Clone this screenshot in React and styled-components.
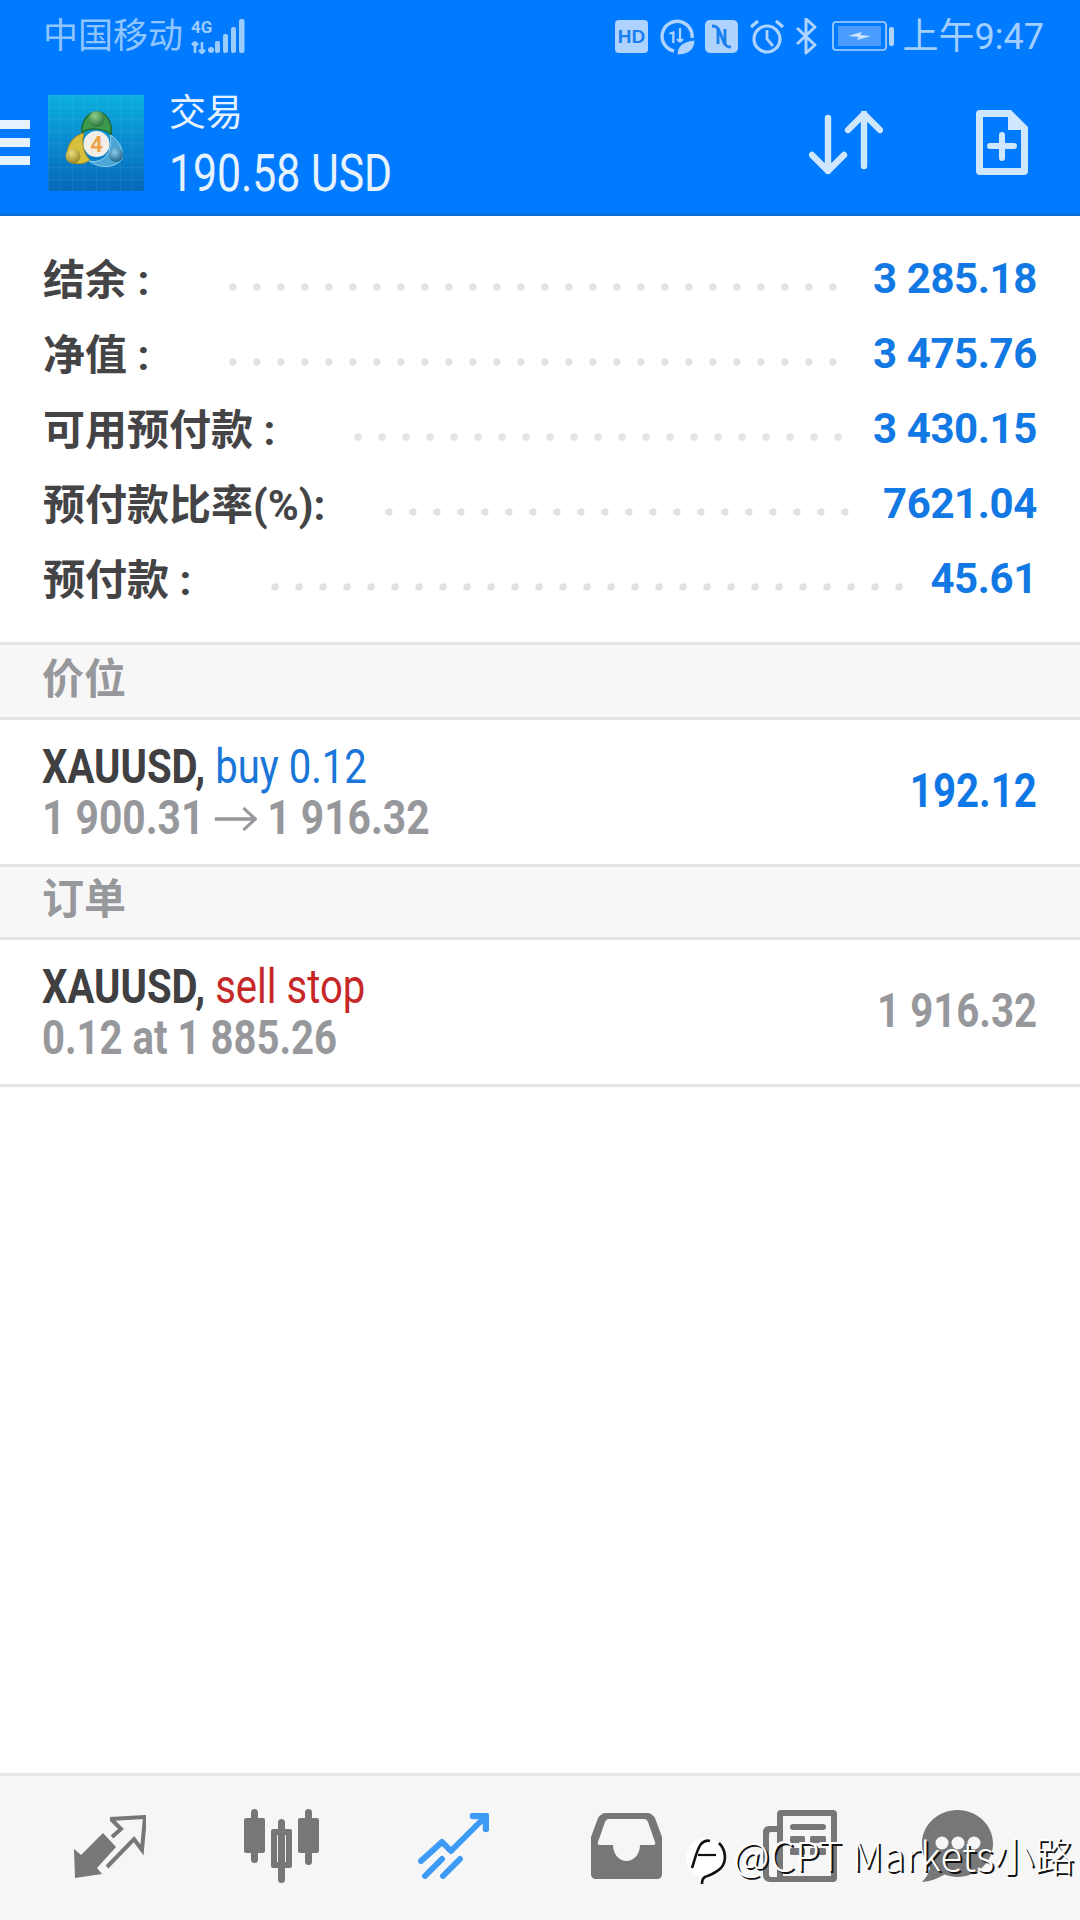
import React from "react";
import styled, { createGlobalStyle } from "styled-components";

const GlobalStyle = createGlobalStyle`
  html, body { margin: 0; padding: 0; background: #fff; }
  body { font-family: Roboto, "Noto Sans CJK SC", sans-serif; }
  * { box-sizing: border-box; }
`;

const summary = [
  { label: "结余 :", value: "3 285.18", gap: 80, dots: 26 },
  { label: "净值 :", value: "3 475.76", gap: 80, dots: 26 },
  { label: "可用预付款 :", value: "3 430.15", gap: 79, dots: 21 },
  { label: "预付款比率(%):", value: "7621.04", gap: 60, dots: 20 },
  { label: "预付款 :", value: "45.61", gap: 80, dots: 27 },
];

export default function App() {
  return (
    <Screen>
      <GlobalStyle />
      <TopBar>
        <StatusBar>
          <Carrier>中国移动</Carrier>
          <SignalIcon />
          <StatusRight>
            <StatusIcons />
            <Clock>上午9:47</Clock>
          </StatusRight>
        </StatusBar>
        <AppBar>
          <Burger><i /><i /><i /></Burger>
          <Mt4Logo />
          <Titles>
            <Title>交易</Title>
            <Profit>190.58 USD</Profit>
          </Titles>
          <Actions>
            <SortIcon />
            <NewOrderIcon />
          </Actions>
        </AppBar>
      </TopBar>

      <Summary>
        {summary.map((row) => (
          <SummaryRow key={row.label}>
            <Label>{row.label}</Label>
            <Leader $gap={row.gap} $dots={row.dots} />
            <Amount>{row.value}</Amount>
          </SummaryRow>
        ))}
      </Summary>

      <SectionHead $height={75} $lift={11}>价位</SectionHead>
      <TradeRow>
        <div>
          <TradeLine>
            <Symbol>XAUUSD,</Symbol> <Side $color="#1976d8">buy 0.12</Side>
          </TradeLine>
          <TradeLine $muted $squeeze={0.85}>1 900.31 <ArrowGlyph /> 1 916.32</TradeLine>
        </div>
        <TradeValue $color="#0f78e6">192.12</TradeValue>
      </TradeRow>

      <SectionHead $height={73} $lift={14}>订单</SectionHead>
      <TradeRow>
        <div>
          <TradeLine>
            <Symbol>XAUUSD,</Symbol> <Side $color="#c62828">sell stop</Side>
          </TradeLine>
          <TradeLine $muted $squeeze={0.835}>0.12 at 1 885.26</TradeLine>
        </div>
        <TradeValue $color="#97989c">1 916.32</TradeValue>
      </TradeRow>

      <Spacer />

      <BottomNav>
        <NavSlot $left={74}><QuotesIcon /></NavSlot>
        <NavSlot $left={98}><ChartIcon /></NavSlot>
        <NavSlot $left={99}><TradeIcon /></NavSlot>
        <NavSlot $left={102}><InboxIcon /></NavSlot>
        <NavSlot $left={101}><NewsIcon /></NavSlot>
        <NavSlot $left={85}><ChatIcon /></NavSlot>
      </BottomNav>

      <Watermark>
        <WatermarkIcon />
        <WatermarkText>@CPT Markets小路</WatermarkText>
      </Watermark>
    </Screen>
  );
}

/* ---- icons ---- */

const SignalIcon = () => (
  <SignalSvg width="54" height="36" viewBox="0 0 54 36">
    <text x="0" y="14" fontFamily="Roboto" fontWeight="700" fontSize="17" fill="#9ccbff">4G</text>
    <path d="M4 34V23M4 23l-3 3M4 23l3 3M11 23v11M11 34l-3-3M11 34l3-3" stroke="#9ccbff" strokeWidth="2.600" fill="none" />
    <g fill="#9ccbff">
      <circle cx="20" cy="31" r="3" />
      <rect x="24" y="22" width="5" height="12" rx="2" />
      <rect x="32" y="15" width="5" height="19" rx="2" />
      <rect x="40" y="8" width="5" height="26" rx="2" />
      <rect x="48" y="0" width="5.500" height="34" rx="2" />
    </g>
  </SignalSvg>
);

const StatusIcons = () => (
  <svg width="279" height="38" viewBox="0 0 279 38">
    <rect x="0" y="2" width="33" height="33" rx="4" fill="#aed3ff" />
    <text x="16.500" y="25" textAnchor="middle" fontFamily="Liberation Sans" fontWeight="700" fontSize="19" fill="#1a7fee">HD</text>

    <path d="M59 33A15 15 0 1 1 77 20" fill="none" stroke="#aed3ff" strokeWidth="3.400" />
    <text x="53" y="25" fontFamily="Roboto" fontWeight="700" fontSize="16" fill="#aed3ff">1</text>
    <path d="M65 10v14m0 0l-3-3m3 3l3-3" fill="none" stroke="#aed3ff" strokeWidth="2.200" />
    <path d="M62 37c0-9 6-14 18-15 0 10-7 15-18 15z" fill="#aed3ff" stroke="#007aff" strokeWidth="1" />

    <rect x="90" y="2" width="33" height="33" rx="5" fill="#aed3ff" />
    <path d="M97 8c5 0 6 2 6 5v13M116 29c-5 0-6-2-6-5V11M103 10l7 17" fill="none" stroke="#1a7fee" strokeWidth="2.800" />

    <circle cx="152" cy="21" r="13" fill="none" stroke="#aed3ff" strokeWidth="3.200" />
    <path d="M152 12v9l6 7" fill="none" stroke="#aed3ff" strokeWidth="2.800" />
    <path d="M136 9l7-6M168 9l-7-6" stroke="#aed3ff" strokeWidth="3.200" />

    <path d="M182 10l18 17-9 8V1l9 8-18 17" fill="none" stroke="#aed3ff" strokeWidth="3" strokeLinejoin="round" />

    <rect x="218" y="4" width="53" height="28" rx="3" fill="none" stroke="#aed3ff" strokeWidth="1.600" />
    <rect x="223" y="8" width="43" height="20" fill="#4a9cff" />
    <path d="M233 18l14-4-2 3 11 1-14 4 2-3z" fill="#cfe6ff" />
    <rect x="274" y="9" width="5" height="19" rx="2" fill="#aed3ff" />
  </svg>
);

const Mt4Logo = () => (
  <LogoSvg width="96" height="96" viewBox="0 0 96 96">
    <defs>
      <linearGradient id="tile" x1="0" y1="0" x2="0" y2="1">
        <stop offset="0" stopColor="#0bb0dd" />
        <stop offset="0.55" stopColor="#0a86ce" />
        <stop offset="1" stopColor="#0668b8" />
      </linearGradient>
      <pattern id="mesh" width="12" height="12" patternUnits="userSpaceOnUse">
        <path d="M12 0H0V12" fill="none" stroke="#ffffff" strokeOpacity="0.1" />
      </pattern>
      <radialGradient id="ballG" cx="0.4" cy="0.3" r="0.8">
        <stop offset="0" stopColor="#8fcf8a" />
        <stop offset="1" stopColor="#1f6a36" />
      </radialGradient>
      <radialGradient id="ballY" cx="0.4" cy="0.3" r="0.8">
        <stop offset="0" stopColor="#ece07c" />
        <stop offset="1" stopColor="#8f7a1c" />
      </radialGradient>
      <radialGradient id="ballB" cx="0.4" cy="0.3" r="0.8">
        <stop offset="0" stopColor="#8accea" />
        <stop offset="1" stopColor="#14557f" />
      </radialGradient>
    </defs>
    <rect width="96" height="96" fill="url(#tile)" />
    <rect width="96" height="96" fill="url(#mesh)" />
    <path d="M34 38C33 26 40 17 49 17c9 0 16 10 14 23-5-7-23-8-29-2z" fill="#3c9a4c" stroke="#1f6a36" strokeWidth="1.500" />
    <path d="M36 38C26 40 18 50 19 62c3 8 15 9 23 3-6-5-9-17-6-27z" fill="#d7c03c" stroke="#9c8a22" strokeWidth="1" />
    <path d="M62 40c8 4 14 14 12 24-6 9-22 10-33 2 9 2 17-2 20-10 2-6 2-11 1-16z" fill="#4aa6d6" stroke="#8fd0ec" strokeWidth="1" />
    <circle cx="48.500" cy="24" r="8" fill="url(#ballG)" />
    <circle cx="25" cy="61" r="7.500" fill="url(#ballY)" />
    <circle cx="68" cy="60" r="7" fill="url(#ballB)" />
    <circle cx="48.500" cy="49" r="13" fill="#f3efe8" />
    <text x="48.500" y="57" textAnchor="middle" fontFamily="Roboto" fontWeight="700" fontSize="22" fill="#eea24a">4</text>
  </LogoSvg>
);

const SortIcon = () => (
  <svg width="74" height="64" viewBox="0 0 74 64" fill="none" stroke="#cfe6ff" strokeWidth="6.400" strokeLinecap="round" strokeLinejoin="round">
    <path d="M19 7v53M3 44l16 16 16-16" />
    <path d="M55 2v53M39 19L55 3l16 16" />
  </svg>
);

const NewOrderIcon = () => (
  <svg width="54" height="67" viewBox="0 0 54 67">
    <path d="M5 1h31l17 17v44a4 4 0 0 1-4 4H5a4 4 0 0 1-4-4V5a4 4 0 0 1 4-4zM8 8v51h38V21H33V8z" fill="#cfe6ff" fillRule="evenodd" />
    <path d="M27 26v23M15 37h24" stroke="#cfe6ff" strokeWidth="6" strokeLinecap="round" />
  </svg>
);

const ArrowGlyph = () => (
  <ArrowSvg width="50" height="26" viewBox="0 0 50 26" fill="none" stroke="#97989c" strokeWidth="3.400">
    <path d="M0 13h48M34 2l14 11-14 11" />
  </ArrowSvg>
);

const QuotesIcon = () => (
  <svg width="72" height="63" viewBox="0 0 72 63">
    <path d="M0 34l7 6L29 18l13 14-19 21 5 6-27 4z" fill="#777" />
    <path d="M36 4l35-2-3 33-8-11-27 28" fill="none" stroke="#777" strokeWidth="4" />
    <path d="M37 4l10 10-9 8" fill="none" stroke="#777" strokeWidth="4" />
  </svg>
);

const ChartIcon = () => (
  <svg width="75" height="74" viewBox="0 0 75 74" fill="#777">
    <rect x="7" y="0" width="7" height="54" rx="3.500" />
    <rect x="0" y="9" width="21" height="35" rx="2" />
    <rect x="34" y="10" width="7" height="64" rx="3.500" />
    <path d="M29 20h17a2 2 0 0 1 2 2v35a2 2 0 0 1-2 2H29a2 2 0 0 1-2-2V22a2 2 0 0 1 2-2zM33 26v27h9V26z" fillRule="evenodd" />
    <rect x="61" y="0" width="7" height="56" rx="3.500" />
    <rect x="54" y="9" width="21" height="35" rx="2" />
  </svg>
);

const TradeIcon = () => (
  <svg width="71" height="66" viewBox="0 0 71 66" fill="none" stroke="#3d9bf5" strokeLinecap="round" strokeLinejoin="round">
    <path d="M3 48L24 29l9 9L66 5" strokeWidth="6" />
    <path d="M55 3h13v13" strokeWidth="6.500" />
    <path d="M7 63l17-17M25 63l17-17" strokeWidth="6" />
  </svg>
);

const InboxIcon = () => (
  <svg width="71" height="66" viewBox="0 0 71 66">
    <path
      d="M15 0h41c4 0 6 2 8 5l7 19v37c0 3-2 5-5 5H5c-3 0-5-2-5-5V24L7 5c2-3 4-5 8-5zM18 6c-2 0-3 1-4 3L7 29c-1 2 0 3 2 3h13c0 9 6 16 13.500 16S49 41 49 32h13c2 0 3-1 2-3L57 9c-1-2-2-3-4-3z"
      fill="#777"
      fillRule="evenodd"
    />
  </svg>
);

const NewsIcon = () => (
  <svg width="74" height="72" viewBox="0 0 74 72" fill="#777">
    <path d="M18 0h52a4 4 0 0 1 4 4v64a4 4 0 0 1-4 4H7c-4 0-7-3-7-7V22c0-3 2-6 6-6h8V4a4 4 0 0 1 4-4zm2 6v60h48V6zM14 22H8a2 2 0 0 0-2 2v41a2 2 0 0 0 2 2h6z" fillRule="evenodd" />
    <rect x="27" y="14" width="36" height="6" rx="3" />
    <rect x="27" y="26" width="15" height="7" rx="1.500" />
    <rect x="47" y="26" width="16" height="7" rx="1.500" />
    <rect x="27" y="38" width="15" height="7" rx="1.500" />
    <rect x="47" y="38" width="16" height="7" rx="1.500" />
  </svg>
);

const ChatIcon = () => (
  <svg width="71" height="72" viewBox="0 0 71 72">
    <path d="M35.500 0C55 0 71 15 71 33.500S55 67 35.500 67c-5 0-9-1-13-2.500C15 69 8 71.500 0 72c4-4 7-9 8-14C3 51 0 43 0 33.500 0 15 16 0 35.500 0z" fill="#777" />
    <circle cx="20" cy="33" r="6.500" fill="#f6f6f6" />
    <circle cx="36" cy="33" r="6.500" fill="#f6f6f6" />
    <circle cx="52" cy="33" r="6.500" fill="#f6f6f6" />
  </svg>
);

const WatermarkIcon = () => (
  <svg width="42" height="50" viewBox="0 0 42 50" fill="none">
    <circle cx="20" cy="23" r="20" fill="#fff" />
    <path d="M6 33c3-9 5-19 9-24 3-3 6-4 9-3" stroke="#111" strokeWidth="2.600" />
    <path d="M12 20h18" stroke="#111" strokeWidth="2.200" />
    <path d="M33 8c7 7 8 18 2 25-5 5-11 7-16 9-2 1-3 3-3 7" stroke="#111" strokeWidth="2.600" />
  </svg>
);

/* ---- layout ---- */

const Screen = styled.div`
  position: relative;
  width: 1080px;
  height: 1920px;
  display: flex;
  flex-direction: column;
  overflow: hidden;
  background: #fff;
`;

const TopBar = styled.header`
  height: 216px;
  background: #007aff;
  border-bottom: 3px solid #0a6fd6;
`;

const StatusBar = styled.div`
  height: 72px;
  padding: 2px 36px 0 43px;
  display: flex;
  align-items: center;
`;

const Carrier = styled.span`
  font-size: 35px;
  color: #8fc5ff;
  line-height: 1.3;
`;

const SignalSvg = styled.svg`
  margin-left: 8px;
`;

const StatusRight = styled.div`
  margin-left: auto;
  display: flex;
  align-items: center;
  gap: 9px;
`;

const Clock = styled.span`
  font-size: 36px;
  color: #a3cfff;
  line-height: 1.3;
`;

const AppBar = styled.div`
  height: 141px;
  display: flex;
  align-items: center;
  padding-right: 51px;
`;

const Burger = styled.div`
  width: 30px;
  margin-right: 18px;
  display: flex;
  flex-direction: column;
  gap: 9px;
  i {
    display: block;
    height: 9px;
    background: #e6f3ff;
  }
`;

const LogoSvg = styled.svg`
  flex: none;
`;

const Titles = styled.div`
  margin-left: 25px;
  padding-top: 6px;
  display: flex;
  flex-direction: column;
  color: #e6f3ff;
`;

const Title = styled.div`
  font-size: 37px;
  line-height: 56px;
`;

const Profit = styled.div`
  font-size: 52px;
  line-height: 64px;
  white-space: nowrap;
  transform: scaleX(0.822);
  transform-origin: left;
`;

const Actions = styled.div`
  margin-left: auto;
  display: flex;
  align-items: center;
  gap: 92px;
`;

const Summary = styled.section`
  padding: 25px 43px;
  border-bottom: 3px solid #e4e4e4;
  height: 429px;
`;

const SummaryRow = styled.div`
  height: 75px;
  display: flex;
  align-items: center;
`;

const Label = styled.span`
  padding-bottom: 5px;
  font-size: 42px;
  font-weight: 700;
  color: #444446;
  white-space: nowrap;
`;

const Leader = styled.span`
  flex: none;
  height: 8px;
  margin: 17px 0 0 ${(p) => p.$gap}px;
  width: ${(p) => p.$dots * 24}px;
  background-image: radial-gradient(circle 4px at 4px 4px, #e2e2e2 85%, transparent 100%);
  background-size: 24px 8px;
  background-repeat: repeat-x;
`;

const Amount = styled.span`
  margin-left: auto;
  font-size: 42px;
  font-weight: 700;
  color: #1278e4;
  white-space: nowrap;
  letter-spacing: -0.4px;
`;

const SectionHead = styled.div`
  height: ${(p) => p.$height}px;
  padding: 0 42px ${(p) => p.$lift}px;
  display: flex;
  align-items: center;
  background: #f7f7f7;
  border-bottom: 3px solid #e4e4e4;
  font-size: 42px;
  font-weight: 700;
  color: #97989c;
`;

const TradeRow = styled.div`
  height: 147px;
  padding: 0 43px 0 42px;
  display: flex;
  align-items: center;
  justify-content: space-between;
  border-bottom: 3px solid #e4e4e4;
`;

const TradeLine = styled.div`
  font-size: 48px;
  line-height: 51px;
  white-space: nowrap;
  font-weight: ${(p) => (p.$muted ? 700 : 400)};
  color: ${(p) => (p.$muted ? "#97989c" : "#404042")};
  transform: scaleX(${(p) => p.$squeeze || 0.835});
  transform-origin: left;
`;

const Symbol = styled.span`
  font-weight: 700;
  color: #404042;
`;

const Side = styled.span`
  color: ${(p) => p.$color};
`;

const ArrowSvg = styled.svg`
  vertical-align: 2px;
`;

const TradeValue = styled.div`
  margin-bottom: 4px;
  font-size: 49px;
  font-weight: 700;
  white-space: nowrap;
  color: ${(p) => p.$color};
  transform: scaleX(0.82);
  transform-origin: right;
`;

const Spacer = styled.div`
  flex: 1;
`;

const BottomNav = styled.nav`
  height: 147px;
  padding-bottom: 4px;
  display: flex;
  align-items: center;
  background: #f6f6f6;
  border-top: 3px solid #e6e6e6;
`;

const NavSlot = styled.div`
  display: flex;
  margin-left: ${(p) => p.$left}px;
`;

const Watermark = styled.div`
  position: absolute;
  left: 686px;
  top: 1835px;
  display: flex;
  align-items: flex-start;
  gap: 5px;
`;

const WatermarkText = styled.span`
  margin-top: -5px;
  font-family: "Noto Sans CJK SC", sans-serif;
  font-weight: 300;
  font-size: 40px;
  line-height: 48px;
  letter-spacing: 0.3px;
  color: #fff;
  white-space: nowrap;
  text-shadow: 2px 2px 0 #111;
`;
